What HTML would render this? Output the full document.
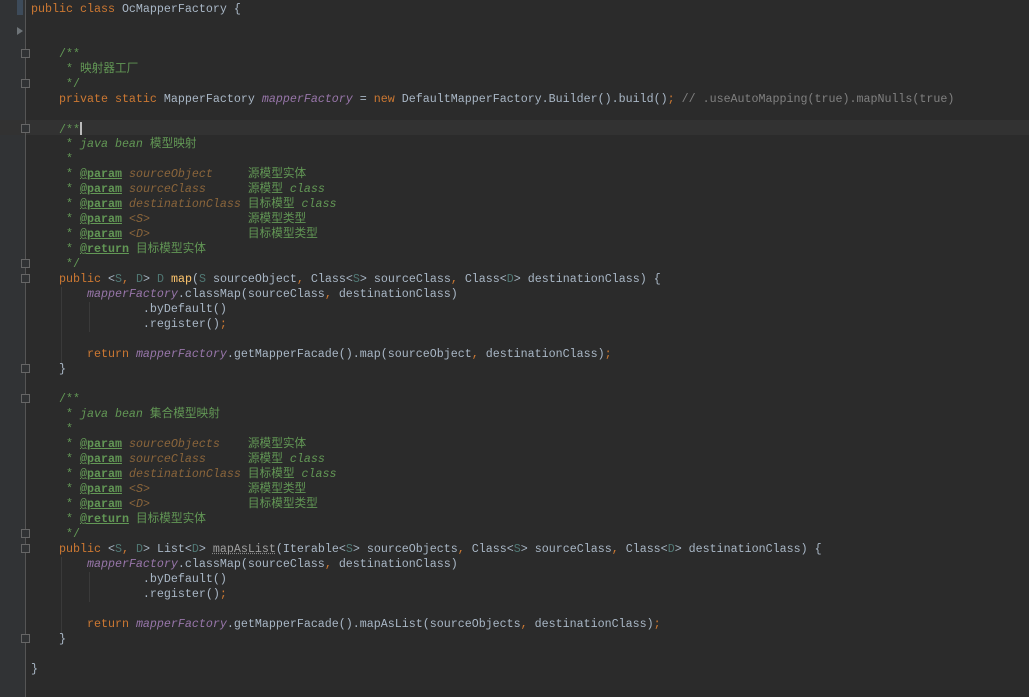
<!DOCTYPE html>
<html><head><meta charset="utf-8"><style>
html,body{margin:0;padding:0;background:#2b2b2b;width:1029px;height:697px;overflow:hidden}
#g{position:absolute;left:0;top:0;width:25px;height:697px;background:#313335}
#gl{position:absolute;left:25px;top:0;width:1px;height:697px;background:#555}
#cur{position:absolute;left:0;top:120px;width:1029px;height:15px;background:#323232}
#code{position:absolute;left:31px;top:2px;font-family:"Liberation Mono","Noto Sans CJK SC",monospace;font-size:11.67px;line-height:15px;color:#a9b7c6}
.l{height:15px;white-space:pre;overflow:visible}
.k{color:#cc7832}.c{color:#629755}.i{font-style:italic}
.t{color:#629755;font-weight:bold;text-decoration:underline}
.p{color:#8a653b;font-style:italic}
.g{color:#507874}.m{color:#ffc66d}.f{color:#9876aa;font-style:italic}
.lc{color:#808080}
.cj{font-family:"Noto Sans CJK SC",sans-serif;font-style:normal;line-height:0}
.fold{position:absolute;left:21px;width:9px;height:9px;border:1px solid #666;box-sizing:border-box;background:#313335}
.ig{position:absolute;width:1px;background:#3a3a3a}
</style></head><body>
<div id="g"></div><div id="cur"></div><div id="gl"></div>
<div style="position:absolute;left:17px;top:0;width:6px;height:15px;background:#3d4b5a"></div>
<div style="position:absolute;left:17px;top:27px;width:0;height:0;border-left:6px solid #6e7478;border-top:4px solid transparent;border-bottom:4px solid transparent"></div>
<div class="fold" style="top:49px"></div><div class="fold" style="top:79px"></div>
<div class="fold" style="top:124px"></div><div class="fold" style="top:259px"></div>
<div class="fold" style="top:274px"></div><div class="fold" style="top:364px"></div>
<div class="fold" style="top:394px"></div><div class="fold" style="top:529px"></div>
<div class="fold" style="top:544px"></div><div class="fold" style="top:634px"></div>
<div class="ig" style="left:61px;top:287px;height:78px"></div>
<div class="ig" style="left:89px;top:302px;height:30px"></div>
<div class="ig" style="left:61px;top:557px;height:78px"></div>
<div class="ig" style="left:89px;top:572px;height:30px"></div>
<div id="code"><div class="l"><span class="k">public class </span>OcMapperFactory {</div><div class="l"> </div><div class="l"> </div><div class="l c">    /**</div><div class="l c">     * <span class="cj">映射器工厂</span></div><div class="l c">     */</div><div class="l">    <span class="k">private static </span>MapperFactory <span class="f">mapperFactory </span>= <span class="k">new </span>DefaultMapperFactory.Builder().build()<span class="k">;</span> <span class="lc">// .useAutoMapping(true).mapNulls(true)</span></div><div class="l"> </div><div class="l c">    /**<span style="display:inline-block;width:2px;height:13px;background:#bbb;vertical-align:-2px"></span></div><div class="l c">     * <span class="i">java bean </span><span class="cj">模型映射</span></div><div class="l c">     *</div><div class="l c">     * <span class="t">@param</span> <span class="p">sourceObject</span>     <span class="cj">源模型实体</span></div><div class="l c">     * <span class="t">@param</span> <span class="p">sourceClass</span>      <span class="cj">源模型</span> <span class="i">class</span></div><div class="l c">     * <span class="t">@param</span> <span class="p">destinationClass</span> <span class="cj">目标模型</span> <span class="i">class</span></div><div class="l c">     * <span class="t">@param</span> <span class="p">&lt;S&gt;</span>              <span class="cj">源模型类型</span></div><div class="l c">     * <span class="t">@param</span> <span class="p">&lt;D&gt;</span>              <span class="cj">目标模型类型</span></div><div class="l c">     * <span class="t">@return</span> <span class="cj">目标模型实体</span></div><div class="l c">     */</div><div class="l">    <span class="k">public </span>&lt;<span class="g">S</span><span class="k">, </span><span class="g">D</span>&gt; <span class="g">D</span> <span class="m">map</span>(<span class="g">S</span> sourceObject<span class="k">, </span>Class&lt;<span class="g">S</span>&gt; sourceClass<span class="k">, </span>Class&lt;<span class="g">D</span>&gt; destinationClass) {</div><div class="l">        <span class="f">mapperFactory</span>.classMap(sourceClass<span class="k">, </span>destinationClass)</div><div class="l">                .byDefault()</div><div class="l">                .register()<span class="k">;</span></div><div class="l"> </div><div class="l">        <span class="k">return </span><span class="f">mapperFactory</span>.getMapperFacade().map(sourceObject<span class="k">, </span>destinationClass)<span class="k">;</span></div><div class="l">    }</div><div class="l"> </div><div class="l c">    /**</div><div class="l c">     * <span class="i">java bean </span><span class="cj">集合模型映射</span></div><div class="l c">     *</div><div class="l c">     * <span class="t">@param</span> <span class="p">sourceObjects</span>    <span class="cj">源模型实体</span></div><div class="l c">     * <span class="t">@param</span> <span class="p">sourceClass</span>      <span class="cj">源模型</span> <span class="i">class</span></div><div class="l c">     * <span class="t">@param</span> <span class="p">destinationClass</span> <span class="cj">目标模型</span> <span class="i">class</span></div><div class="l c">     * <span class="t">@param</span> <span class="p">&lt;S&gt;</span>              <span class="cj">源模型类型</span></div><div class="l c">     * <span class="t">@param</span> <span class="p">&lt;D&gt;</span>              <span class="cj">目标模型类型</span></div><div class="l c">     * <span class="t">@return</span> <span class="cj">目标模型实体</span></div><div class="l c">     */</div><div class="l">    <span class="k">public </span>&lt;<span class="g">S</span><span class="k">, </span><span class="g">D</span>&gt; List&lt;<span class="g">D</span>&gt; <span style="color:#a0a0a0;text-decoration:underline dotted #888">mapAsList</span>(Iterable&lt;<span class="g">S</span>&gt; sourceObjects<span class="k">, </span>Class&lt;<span class="g">S</span>&gt; sourceClass<span class="k">, </span>Class&lt;<span class="g">D</span>&gt; destinationClass) {</div><div class="l">        <span class="f">mapperFactory</span>.classMap(sourceClass<span class="k">, </span>destinationClass)</div><div class="l">                .byDefault()</div><div class="l">                .register()<span class="k">;</span></div><div class="l"> </div><div class="l">        <span class="k">return </span><span class="f">mapperFactory</span>.getMapperFacade().mapAsList(sourceObjects<span class="k">, </span>destinationClass)<span class="k">;</span></div><div class="l">    }</div><div class="l"> </div><div class="l">}</div></div>
</body></html>
